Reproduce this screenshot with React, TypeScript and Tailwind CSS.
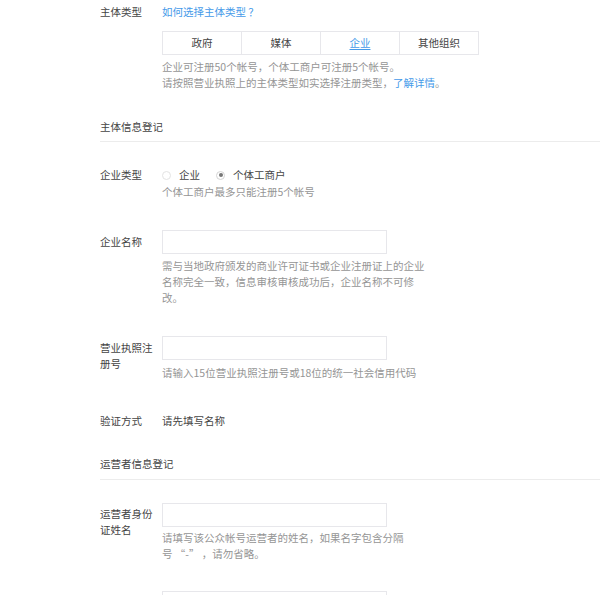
import type { ReactNode } from "react";

const tabs = ["政府", "媒体", "企业", "其他组织"];

function Row({ label, labelPad = "pt-[4px]", className = "", children }: { label: string; labelPad?: string; className?: string; children: ReactNode }) {
  return (
    <div className={`flex items-start ${className}`}>
      <div className={`w-[62px] shrink-0 pr-[6px] text-[#444] ${labelPad}`}>{label}</div>
      <div className="flex-1">{children}</div>
    </div>
  );
}

function Input() {
  return <div className="h-[24px] w-[225px] border border-[#e7e7eb] bg-white" />;
}

function Help({ children, className = "mt-[4px]" }: { children: ReactNode; className?: string }) {
  return <p className={`w-[300px] text-[#959595] ${className}`}>{children}</p>;
}

function Radio({ checked, label }: { checked?: boolean; label: string }) {
  return (
    <label className="flex items-center gap-[8px]">
      <span className={`flex h-[9px] w-[9px] items-center justify-center rounded-full border ${checked ? "border-[#d4d4d4]" : "border-[#e3e3e3]"}`}>
        {checked && <span className="h-[4px] w-[4px] rounded-full bg-[#777]" />}
      </span>
      <span className="text-[#444]">{label}</span>
    </label>
  );
}

export default function App() {
  return (
    <div className="h-[595px] w-[600px] overflow-hidden bg-white font-['Noto_Sans_CJK_SC','Microsoft_YaHei',sans-serif] text-[10.5px] leading-4">
      <div className="pl-[100px]">
        <Row label="主体类型" className="pt-[4px]" labelPad="">
          <a className="text-[#459ae9]">如何选择主体类型 ？</a>
          <div className="mt-[11px] flex h-[24px] w-[317px] border border-[#e7e7eb]">
            {tabs.map((t, i) => (
              <div key={t} className={`flex flex-1 items-center justify-center ${i > 0 ? "border-l border-[#e7e7eb]" : ""} ${t === "企业" ? "text-[#459ae9] underline underline-offset-2" : "text-[#444]"}`}>
                {t}
              </div>
            ))}
          </div>
          <p className="mt-[4px] text-[#959595]">
            企业可注册50个帐号，个体工商户可注册5个帐号。
            <br />
            请按照营业执照上的主体类型如实选择注册类型，<a className="text-[#459ae9]">了解详情</a>。
          </p>
        </Row>

        <div className="mt-[28px] border-b border-[#ececec] pb-[6px] text-[#444]">主体信息登记</div>

        <Row label="企业类型" className="mt-[25px]" labelPad="">
          <div className="flex items-center gap-[16px]">
            <Radio label="企业" />
            <Radio checked label="个体工商户" />
          </div>
          <Help className="mt-[1px]">个体工商户最多只能注册5个帐号</Help>
        </Row>

        <Row label="企业名称" className="mt-[30px]">
          <Input />
          <Help>
            需与当地政府颁发的商业许可证书或企业注册证上的企业
            <br />
            名称完全一致，信息审核审核成功后，企业名称不可修
            <br />
            改。
          </Help>
        </Row>

        <Row label="营业执照注册号" className="mt-[30px]">
          <Input />
          <Help className="mt-[5px]">请输入15位营业执照注册号或18位的统一社会信用代码</Help>
        </Row>

        <Row label="验证方式" className="mt-[32px]" labelPad="">
          <span className="text-[#444]">请先填写名称</span>
        </Row>

        <div className="mt-[27px] border-b border-[#ececec] pb-[7px] text-[#444]">运营者信息登记</div>

        <Row label="运营者身份证姓名" className="mt-[23px]" labelPad="pt-[3px]">
          <Input />
          <Help className="mt-[3px]">
            请填写该公众帐号运营者的姓名，如果名字包含分隔
            <br />
            号 “-” ，请勿省略。
          </Help>
        </Row>

        <Row label="" className="mt-[29px]">
          <Input />
        </Row>
      </div>
    </div>
  );
}
